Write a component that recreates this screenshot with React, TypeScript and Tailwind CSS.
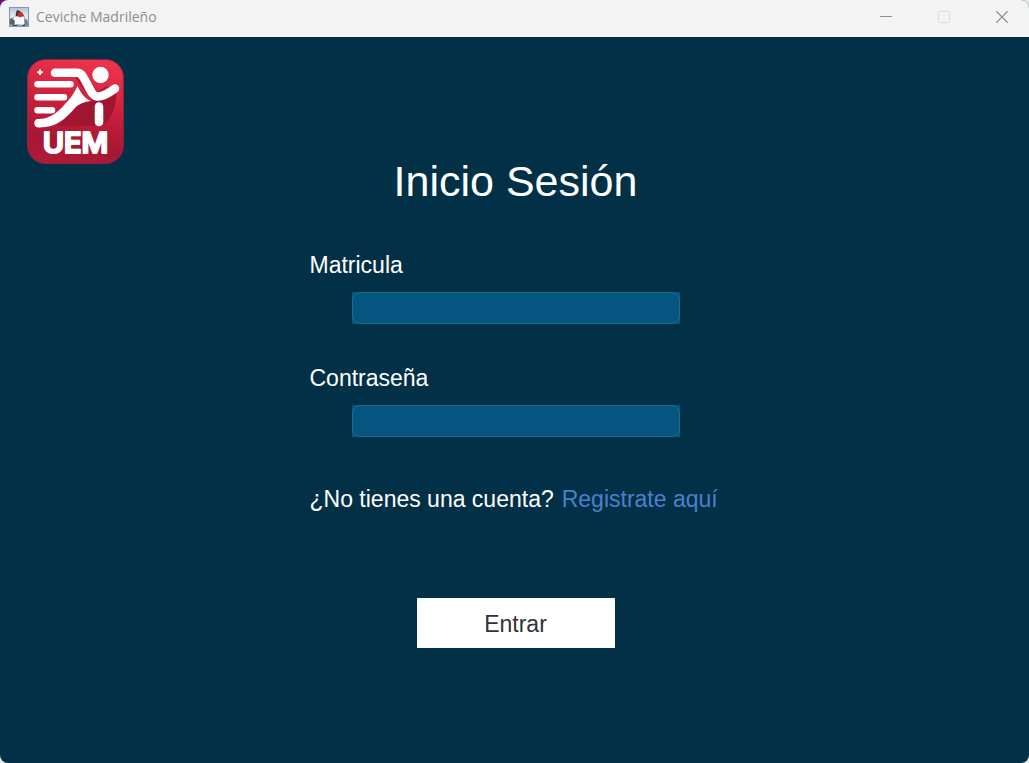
import React from "react";

function DukeIcon() {
  return (
    <svg viewBox="0 0 20 20" className="h-5 w-5" aria-hidden="true">
      <defs>
        <linearGradient id="duke-bg" x1="0" y1="0" x2="0" y2="1">
          <stop offset="0" stopColor="#b4c6da" />
          <stop offset="0.5" stopColor="#e6ecf2" />
          <stop offset="1" stopColor="#8497ac" />
        </linearGradient>
      </defs>
      <rect x="0.5" y="0.5" width="19" height="19" fill="url(#duke-bg)" stroke="#8298b2" />
      <path d="M1 12 L5 10 L7 15 L4 18 L1 17Z" fill="#55606d" />
      <path d="M14 11 L18 13 L19 18 L15 18Z" fill="#6c7885" />
      <path d="M8 3 C7 5 6.500 8 6.500 11 L15.500 11 C15 7 12 4 8 3Z" fill="#33373d" />
      <path d="M6.500 9.500 L3 12 L5.500 13 L6 18 L9 17 L14 18 L15.500 17 L15 9.500 L10 9Z" fill="#f8f9fa" />
      <ellipse cx="11.200" cy="7.600" rx="2.700" ry="2.600" fill="#db2b24" />
      <path d="M4 18.300 H8 M13 18.300 H16" stroke="#2b3038" strokeWidth="1" />
    </svg>
  );
}

function Logo() {
  return (
    <svg viewBox="0 0 97 105" className="h-[105px] w-[97px]" role="img" aria-label="UEM">
      <defs>
        <linearGradient id="logo-bg" x1="0.600" y1="0" x2="0.400" y2="1">
          <stop offset="0" stopColor="#ee334c" />
          <stop offset="0.450" stopColor="#c91f3d" />
          <stop offset="0.800" stopColor="#a51733" />
          <stop offset="1" stopColor="#b01a37" />
        </linearGradient>
      </defs>
      <rect x="0.500" y="0.500" width="96" height="104" rx="18" fill="url(#logo-bg)" stroke="#8f2340" />
      <path d="M51 45 L68 42 L89 33 C90 46 85 58 77 66 L76 47 H68 V67 H30 C38 61 45 52 51 45Z" fill="#a01632" />
      <path d="M48 18 L57 31 L65 42 L70 42 L87 32 L80 27 L70 33 L57 15Z" fill="#ab1836" />
      <path d="M13 10.500 V16 M10.200 13.300 H15.800" stroke="#fff" strokeWidth="2" />
      <g fill="none" stroke="#fff" strokeLinecap="round" strokeLinejoin="round">
        <path d="M10.500 25.300 H43.500 M10.500 38.300 H37 M10.500 51.300 H25" strokeWidth="6.500" />
        <path d="M28 13.700 H50 C55 13.700 56 18 59 23 C63 30 65 37 70 37.500 C76 38 82 34 88 29.500" strokeWidth="8.500" />
        <path d="M72 47.500 V63" strokeWidth="8.500" />
      </g>
      <path d="M50.500 27 C53 33 58 40 64 42 C57 42.500 52 45 48 49 C38 60 29 69 11 68.500 C6 68.300 6 60 11 60 C24 60 32 52 38 45 C44 39 47 34 50.500 27Z" fill="#fff" />
      <circle cx="73.500" cy="16" r="8.200" fill="#fff" />
      <text
        x="48.500"
        y="94"
        textAnchor="middle"
        fill="#fff"
        stroke="#fff"
        strokeWidth="2"
        strokeLinejoin="round"
        className="font-['Inter',sans-serif] text-[29px] font-semibold"
      >
        UEM
      </text>
    </svg>
  );
}

function TitleBar() {
  return (
    <header className="flex h-[37px] items-center justify-between bg-[#f3f3f3] pl-[9px] text-[#8f8f8f]">
      <div className="flex items-center gap-[7px] pb-[3px]">
        <DukeIcon />
        <span className="font-['Open_Sans','Noto_Sans',sans-serif] text-sm">Ceviche Madrileño</span>
      </div>
      <div className="flex items-center gap-1 pb-1">
        <button type="button" aria-label="Minimizar" className="flex h-8 w-[54px] items-center justify-center">
          <svg viewBox="0 0 12 12" className="h-3 w-3">
            <path d="M0 5.500 H12" stroke="#8f8f8f" />
          </svg>
        </button>
        <button type="button" aria-label="Maximizar" disabled className="flex h-8 w-[54px] items-center justify-center">
          <svg viewBox="0 0 12 12" className="h-3 w-3">
            <rect x="0.500" y="0.500" width="11" height="11" rx="1" fill="none" stroke="#dcdcdc" />
          </svg>
        </button>
        <button type="button" aria-label="Cerrar" className="flex h-8 w-[54px] items-center justify-center">
          <svg viewBox="0 0 12 12" className="h-3 w-3">
            <path d="M0.300 0.300 L11.700 11.700 M11.700 0.300 L0.300 11.700" stroke="#858585" strokeWidth="1.200" />
          </svg>
        </button>
      </div>
    </header>
  );
}

function Field({ id, label, type }: { id: string; label: string; type: string }) {
  return (
    <div className="flex flex-col gap-[13px]">
      <label htmlFor={id} className="leading-7">
        {label}
      </label>
      <div className="mx-auto w-full max-w-[328px] bg-[#045680]">
        <input
          id={id}
          type={type}
          className="block h-8 w-full rounded-lg border border-[#26688d] bg-[#045680] px-2 text-base text-white outline-none"
        />
      </div>
    </div>
  );
}

export default function App() {
  return (
    <div className="min-h-screen bg-[linear-gradient(to_bottom_right,#800080_10%,#e8e8e8_10%)]">
      <div className="flex min-h-screen flex-col overflow-hidden rounded-lg bg-[#023047] font-['Liberation_Sans',Arial,sans-serif] text-[23px] text-white">
        <TitleBar />
        <main className="grid grow grid-cols-[1fr_minmax(0,412px)_1fr] pl-0.5">
          <div className="pt-[22px] pl-[25px]">
            <Logo />
          </div>
          <form className="flex flex-col pt-[120px]" onSubmit={(e: React.FormEvent) => e.preventDefault()}>
            <h1 className="text-center text-[43px] leading-[48px]">Inicio Sesión</h1>
            <div className="mt-[46px] flex flex-col gap-10">
              <Field id="matricula" label="Matricula" type="text" />
              <Field id="contrasena" label="Contraseña" type="password" />
            </div>
            <p className="mt-12 flex gap-2 whitespace-nowrap leading-7">
              <span>¿No tienes una cuenta?</span>
              <a href="#registro" className="text-[#4a80cd]">
                Registrate aquí
              </a>
            </p>
            <button type="submit" className="mx-auto mt-[85px] h-[50px] w-[198px] bg-white pt-0.5 text-[#333333]">
              Entrar
            </button>
          </form>
        </main>
      </div>
    </div>
  );
}
